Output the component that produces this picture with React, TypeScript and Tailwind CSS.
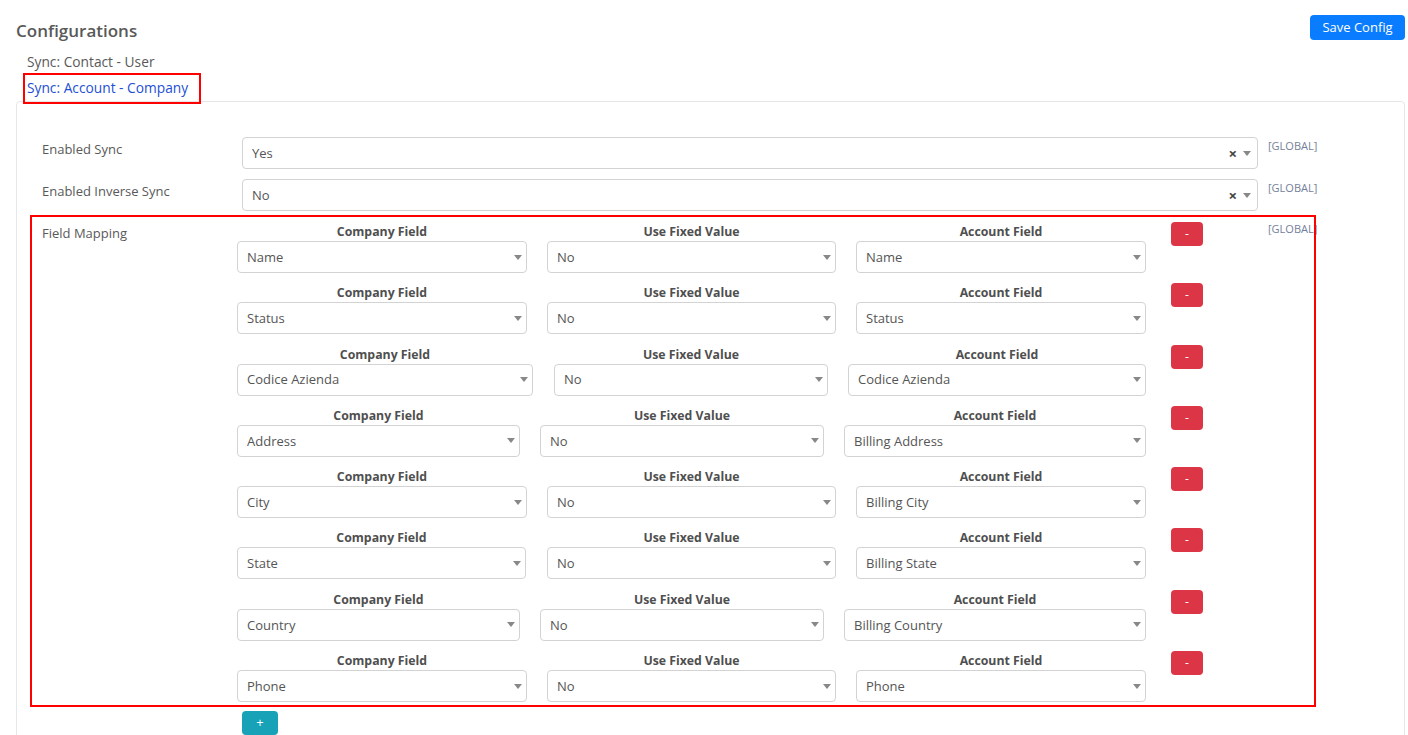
import type { ReactNode } from 'react'

type Mapping = {
  company: string
  fixed: string
  account: string
  // column widths: company, gap, fixed, gap, account
  cols: [number, number, number, number, number]
}

const std: Mapping['cols'] = [290, 20, 289, 20, 290]
const wide: Mapping['cols'] = [283, 20, 284, 20, 302]

const mappings: Mapping[] = [
  { company: 'Name', fixed: 'No', account: 'Name', cols: std },
  { company: 'Status', fixed: 'No', account: 'Status', cols: std },
  { company: 'Codice Azienda', fixed: 'No', account: 'Codice Azienda', cols: [296, 21, 274, 20, 298] },
  { company: 'Address', fixed: 'No', account: 'Billing Address', cols: wide },
  { company: 'City', fixed: 'No', account: 'Billing City', cols: std },
  { company: 'State', fixed: 'No', account: 'Billing State', cols: [289, 21, 289, 20, 290] },
  { company: 'Country', fixed: 'No', account: 'Billing Country', cols: wide },
  { company: 'Phone', fixed: 'No', account: 'Phone', cols: std },
]

function Caret() {
  return <span className="inline-block h-0 w-0 border-x-[4px] border-t-[5px] border-x-transparent border-t-[#888]" />
}

function Select({ value, clearable, className }: { value: string; clearable?: boolean; className?: string }) {
  return (
    <div
      className={`flex items-center rounded-[4px] border border-[#d3d3d3] bg-white pl-[9px] text-[13px] text-[#555] ${className ?? ''}`}
    >
      <span className="flex-1 truncate pt-[1px]">{value}</span>
      {clearable && <span className="mr-[5px] text-[15px] font-bold leading-none text-[#444]">×</span>}
      <span className={`flex w-[10px] justify-center ${clearable ? 'mr-[5px]' : 'mr-[3px]'}`}>
        <Caret />
      </span>
    </div>
  )
}

function Global() {
  return <div className="ml-[10px] text-[11px] leading-4 text-[#74819a]">[GLOBAL]</div>
}

function FormRow({ label, children }: { label: string; children: ReactNode }) {
  return (
    <div className="mb-[10px] flex items-start">
      <div className="w-[200px] pt-[2px] text-[13px] leading-5 text-[#595959]">{label}</div>
      {children}
    </div>
  )
}

function MappingRow({ m }: { m: Mapping }) {
  const [cw, g1, fw, g2, aw] = m.cols
  const cells = [
    { title: 'Company Field', value: m.company, w: cw, gap: 0 },
    { title: 'Use Fixed Value', value: m.fixed, w: fw, gap: g1 },
    { title: 'Account Field', value: m.account, w: aw, gap: g2 },
  ]
  return (
    <div className="mb-[9.3px] flex items-start">
      <div className="flex w-[909px]">
        {cells.map((c) => (
          <div key={c.title} style={{ width: c.w, marginLeft: c.gap }} className="shrink-0">
            <div className="h-[20px] pt-[1px] text-center text-[12.3px] font-bold leading-[19px] text-[#4f4f4f]">
              {c.title}
            </div>
            <Select value={c.value} className="h-[32px]" />
          </div>
        ))}
      </div>
      <button className="ml-[25px] mt-[1px] h-[24px] w-[32px] rounded-[4px] bg-[#dc3545] text-[12px] leading-none text-white">
        -
      </button>
    </div>
  )
}

export default function App() {
  return (
    <div
      className="min-h-screen bg-white pl-4 pr-[3px] pt-[15px] text-[#555]"
      style={{ fontFamily: '"Open Sans", "Noto Sans", Arial, sans-serif' }}
    >
      <div className="flex h-[34px] items-start justify-between">
        <h1 className="mt-[4px] text-[17px] font-semibold leading-6 text-[#595959]">Configurations</h1>
        <button className="h-[25px] w-[95px] rounded-[4px] bg-[#0a7cff] text-[13px] text-white">Save Config</button>
      </div>

      <div className="relative z-10 ml-[9px] flex flex-col text-[13.75px]">
        <div className="flex h-[26px] items-center pl-[2px] text-[#595959]">Sync: Contact - User</div>
        <div className="flex h-[27px] w-[174px] items-center pl-[2px] text-[#1d4fd4] outline-2 outline-[#ff0000]">
          Sync: Account - Company
        </div>
      </div>

      <div className="-mt-px min-h-[640px] rounded-[4px] border border-[#e6e6e6] pl-[25px] pt-[35px]">
        <FormRow label="Enabled Sync">
          <Select value="Yes" clearable className="h-[32px] w-[1016px]" />
          <div className="pt-[1px]">
            <Global />
          </div>
        </FormRow>
        <FormRow label="Enabled Inverse Sync">
          <Select value="No" clearable className="h-[32px] w-[1016px]" />
          <div className="pt-[1px]">
            <Global />
          </div>
        </FormRow>

        <div className="relative flex items-start">
          <div className="w-[200px] pt-[2px] text-[13px] leading-5 text-[#595959]">Field Mapping</div>
          <div className="-ml-[5px] w-[1021px]">
            {mappings.map((m) => (
              <MappingRow key={m.company} m={m} />
            ))}
          </div>
          <Global />
          <div className="pointer-events-none absolute -left-[12px] -top-[6px] h-[492px] w-[1286px] border-2 border-[#ff0000]" />
        </div>

        <div className="-mt-[2px] pl-[200px]">
          <button className="h-[24px] w-[36px] rounded-[4px] bg-[#17a2b8] text-[13px] leading-none text-white">+</button>
        </div>
      </div>
    </div>
  )
}
